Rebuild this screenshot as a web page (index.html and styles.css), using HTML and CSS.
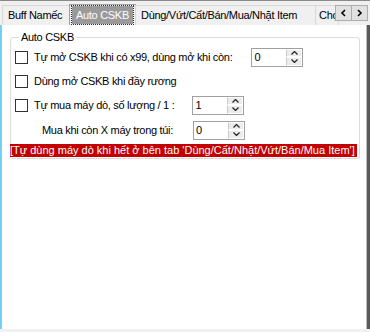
FILE: index.html
```html
<!DOCTYPE html>
<html lang="vi">
<head>
    <meta charset="UTF-8">
    <title>Auto CSKB</title>
    <link rel="stylesheet" href="styles.css">
</head>
<body>
    <div class="window">
        <div class="tabbar">
            <div class="tab tab-buff">Buff Namếc</div>
            <div class="tab active"><span class="focus">Auto CSKB</span></div>
            <div class="tab tab-item">Dùng/Vứt/Cất/Bán/Mua/Nhặt Item</div>
            <div class="tab clipped">Chọn</div>
            <div class="scroller">
                <span class="arrow"><svg width="7" height="8" viewBox="0 0 7 8"><polyline points="5,1 2,4 5,7" fill="none" stroke="#000" stroke-width="1.6"/></svg></span>
                <span class="arrow"><svg width="7" height="8" viewBox="0 0 7 8"><polyline points="2,1 5,4 2,7" fill="none" stroke="#000" stroke-width="1.6"/></svg></span>
            </div>
        </div>
        <div class="panel">
            <fieldset class="group">
                <legend>Auto CSKB</legend>
                <div class="row">
                    <span class="check"></span>
                    <span class="label">Tự mở CSKB khi có x99, dùng mở khi còn:</span>
                    <div class="spin spin-first">
                        <span class="val">0</span>
                        <span class="btns">
                            <i><svg width="7" height="4" viewBox="0 0 7 4"><polyline points="0.5,3.5 3.5,0.5 6.5,3.5" fill="none" stroke="#222" stroke-width="1.2"/></svg></i>
                            <i><svg width="7" height="4" viewBox="0 0 7 4"><polyline points="0.5,0.5 3.5,3.5 6.5,0.5" fill="none" stroke="#222" stroke-width="1.2"/></svg></i>
                        </span>
                    </div>
                </div>
                <div class="row">
                    <span class="check"></span>
                    <span class="label">Dùng mở CSKB khi đầy rương</span>
                </div>
                <div class="row">
                    <span class="check"></span>
                    <span class="label">Tự mua máy dò, số lượng / 1 :</span>
                    <div class="spin spin-buy">
                        <span class="val">1</span>
                        <span class="btns">
                            <i><svg width="7" height="4" viewBox="0 0 7 4"><polyline points="0.5,3.5 3.5,0.5 6.5,3.5" fill="none" stroke="#222" stroke-width="1.2"/></svg></i>
                            <i><svg width="7" height="4" viewBox="0 0 7 4"><polyline points="0.5,0.5 3.5,3.5 6.5,0.5" fill="none" stroke="#222" stroke-width="1.2"/></svg></i>
                        </span>
                    </div>
                </div>
                <div class="row row-last">
                    <span class="label plain">Mua khi còn X máy trong túi:</span>
                    <div class="spin spin-left">
                        <span class="val">0</span>
                        <span class="btns">
                            <i><svg width="7" height="4" viewBox="0 0 7 4"><polyline points="0.5,3.5 3.5,0.5 6.5,3.5" fill="none" stroke="#222" stroke-width="1.2"/></svg></i>
                            <i><svg width="7" height="4" viewBox="0 0 7 4"><polyline points="0.5,0.5 3.5,3.5 6.5,0.5" fill="none" stroke="#222" stroke-width="1.2"/></svg></i>
                        </span>
                    </div>
                </div>
                <div class="notice">[Tự dùng máy dò khi hết ở bên tab 'Dùng/Cất/Nhặt/Vứt/Bán/Mua Item']</div>
            </fieldset>
        </div>
    </div>
</body>
</html>
```

FILE: styles.css
```css
body {
    margin: 0;
    background: #f0f0f0;
    font-family: 'Liberation Sans', Arial, sans-serif;
    font-size: 11px;
    letter-spacing: -0.3px;
    color: #000;
}

.window {
    width: 370px;
    height: 332px;
    border-top: 1px solid #8a8a8a;
    box-sizing: border-box;
    position: relative;
    overflow: hidden;
}

.tabbar {
    display: flex;
    align-items: flex-end;
    height: 24px;
    padding-left: 2px;
    box-sizing: border-box;
}

.tab {
    height: 20px;
    line-height: 19px;
    padding: 0 5px;
    border: 1px solid #d9d9d9;
    border-bottom: none;
    margin-right: -1px;
    background: #f0f0f0;
    white-space: nowrap;
    box-sizing: border-box;
}

.tab-buff {
    width: 68px;
}

.tab-item {
    width: 181px;
}

.tab.active {
    width: 67px;
    height: 21px;
    padding: 1px 2px 0;
    border-color: #a0a0a0;
}

.tab.active .focus {
    display: block;
    background: #9a9a9a;
    color: #fff;
    height: 18px;
    line-height: 18px;
    padding: 0 4px;
    outline: 1px dotted #333;
}

.tab.clipped {
    width: 24px;
    overflow: hidden;
    padding: 0 3px;
}

.scroller {
    position: absolute;
    top: 4px;
    right: 2px;
    display: flex;
    background: #f0f0f0;
}

.arrow {
    display: flex;
    align-items: center;
    justify-content: center;
    width: 17px;
    height: 16px;
    border: 1px solid #adadad;
    margin-left: -1px;
    background: #e1e1e1;
    box-sizing: border-box;
}

.panel {
    height: 304px;
    background: #fff;
    border-left: 2px solid #6fd0f2;
    border-right: 3px solid #5a5a5a;
    box-shadow: inset -1px 0 0 #bdbdbd;
    padding: 6px 7px 0 8px;
    box-sizing: border-box;
}

.group {
    margin: 0;
    padding: 2px 0 6px 4px;
    border: 1px solid #dcdcdc;
    border-radius: 3px;
    height: 128px;
    box-sizing: border-box;
}

.group legend {
    padding: 0 2px;
    margin-left: 4px;
}

.row {
    display: flex;
    align-items: center;
    height: 24px;
}

.row-last {
    margin-top: 1px;
}

.check {
    width: 11px;
    height: 11px;
    border: 1px solid #333;
    background: #fff;
    margin-right: 6px;
}

.label {
    white-space: nowrap;
}

.label.plain {
    margin-left: 27px;
}

.spin {
    display: flex;
    height: 19px;
    width: 52px;
    border: 1px solid #a0a0a0;
    box-sizing: border-box;
    background: #fff;
}

.spin-first {
    margin-left: 19px;
}

.spin-buy {
    margin-left: 18px;
}

.spin-left {
    margin-left: 20px;
}

.val {
    flex: 1;
    padding-left: 2px;
    line-height: 17px;
}

.btns {
    width: 16px;
    display: flex;
    flex-direction: column;
}

.btns i {
    flex: 1;
    display: flex;
    align-items: center;
    justify-content: center;
    background: #ececec;
    border: 1px solid #fff;
    border-left: 1px solid #c8c8c8;
}

.notice {
    margin: 2px 0 0 -5px;
    background: #c20000;
    color: #fff;
    height: 13px;
    line-height: 13px;
    letter-spacing: 0;
    white-space: nowrap;
    width: 347px;
    overflow: hidden;
}
```
